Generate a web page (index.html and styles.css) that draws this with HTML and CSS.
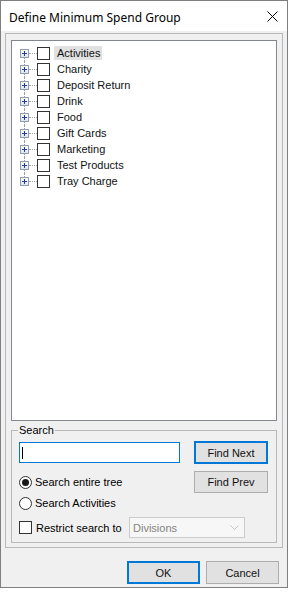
FILE: index.html
```html
<!DOCTYPE html>
<html lang="en">
<head>
  <meta charset="UTF-8">
  <meta name="viewport" content="width=device-width, initial-scale=1.0">
  <title>Define Minimum Spend Group</title>
  <link rel="stylesheet" href="styles.css">
</head>
<body>
  <div class="window">
    <div class="titlebar">
      <span class="title">Define Minimum Spend Group</span>
      <svg class="close" width="11" height="11" viewBox="0 0 11 11">
        <path d="M0.5 0.5 L10.5 10.5 M10.5 0.5 L0.5 10.5" stroke="#000" stroke-width="1" fill="none"/>
      </svg>
    </div>
    <div class="client">
      <div class="panel">
        <div class="tree">
          <ul>
            <li><span class="exp"></span><span class="twig"></span><span class="chk"></span><span class="name selected">Activities</span></li>
            <li><span class="exp"></span><span class="twig"></span><span class="chk"></span><span class="name">Charity</span></li>
            <li><span class="exp"></span><span class="twig"></span><span class="chk"></span><span class="name">Deposit Return</span></li>
            <li><span class="exp"></span><span class="twig"></span><span class="chk"></span><span class="name">Drink</span></li>
            <li><span class="exp"></span><span class="twig"></span><span class="chk"></span><span class="name">Food</span></li>
            <li><span class="exp"></span><span class="twig"></span><span class="chk"></span><span class="name">Gift Cards</span></li>
            <li><span class="exp"></span><span class="twig"></span><span class="chk"></span><span class="name">Marketing</span></li>
            <li><span class="exp"></span><span class="twig"></span><span class="chk"></span><span class="name">Test Products</span></li>
            <li><span class="exp"></span><span class="twig"></span><span class="chk"></span><span class="name">Tray Charge</span></li>
          </ul>
        </div>
        <fieldset class="search">
          <legend>Search</legend>
          <div class="srow first">
            <div class="textbox"><span class="caret"></span></div>
            <button class="btn focus">Find Next</button>
          </div>
          <div class="srow second">
            <label class="opt"><span class="radio on"></span>Search entire tree</label>
            <button class="btn prev">Find Prev</button>
          </div>
          <div class="srow third">
            <label class="opt"><span class="radio"></span>Search Activities</label>
          </div>
          <div class="srow fourth">
            <label class="opt"><span class="box"></span>Restrict search to</label>
            <div class="combo">
              <span>Divisions</span>
              <svg width="9" height="5" viewBox="0 0 9 5">
                <path d="M0.5 0.5 L4.5 4.5 L8.5 0.5" stroke="#c4c4c4" stroke-width="1" fill="none"/>
              </svg>
            </div>
          </div>
        </fieldset>
      </div>
      <div class="actions">
        <button class="btn focus wide">OK</button>
        <button class="btn wide">Cancel</button>
      </div>
    </div>
  </div>
</body>
</html>
```

FILE: styles.css
```css
body {
  margin: 0;
  background: #fff;
  font-family: "Liberation Sans", Arial, sans-serif;
  font-size: 11px;
  color: #000;
}
.window {
  width: 288px;
  height: 588px;
  box-sizing: border-box;
  border: 1px solid #7f7f7f;
  background: #f0f0f0;
  display: flex;
  flex-direction: column;
}
.titlebar {
  height: 30px;
  flex: none;
  background: #fff;
  display: flex;
  align-items: center;
  justify-content: space-between;
  padding: 3px 9px 0 8px;
  box-sizing: border-box;
}
.title {
  font-family: "Noto Sans", sans-serif;
  font-size: 12px;
  line-height: 16px;
}
.close {
  display: block;
  margin-top: -2px;
}
.client {
  flex: 1;
  display: flex;
  flex-direction: column;
}
.panel {
  flex: 1;
  margin: 2px 4px 0 4px;
  border: 1px solid #b9b9b9;
  padding: 6px 5px 4px 5px;
  display: flex;
  flex-direction: column;
}
.tree {
  flex: 1;
  background: #fff;
  border: 1px solid #828790;
}
.tree ul {
  list-style: none;
  margin: 0;
  padding: 4px 0 0 8px;
}
.tree li {
  height: 16px;
  display: flex;
  align-items: center;
  position: relative;
}
.tree li::before {
  content: "";
  position: absolute;
  left: 4px;
  top: 0;
  bottom: 0;
  border-left: 1px dotted #a0a0a0;
}
.tree li:first-child::before {
  top: 8px;
}
.tree li:last-child::before {
  bottom: 8px;
}
.exp {
  width: 9px;
  height: 9px;
  box-sizing: border-box;
  border: 1px solid #919eb0;
  background: linear-gradient(#fff, #dfe4ea);
  position: relative;
  z-index: 1;
}
.exp::before,
.exp::after {
  content: "";
  position: absolute;
  background: #1f3f8f;
}
.exp::before {
  left: 1px;
  top: 3px;
  width: 5px;
  height: 1px;
}
.exp::after {
  left: 3px;
  top: 1px;
  width: 1px;
  height: 5px;
}
.twig {
  width: 8px;
  border-top: 1px dotted #a0a0a0;
}
.chk {
  width: 13px;
  height: 13px;
  box-sizing: border-box;
  border: 1px solid #333;
  background: #fff;
  margin-right: 4px;
}
.name {
  padding: 0 2px 0 3px;
  line-height: 14px;
  color: #111;
}
.name.selected {
  background: #e1e1e1;
}
.search {
  margin: 3px 0 0 0;
  border: 1px solid #b9b9b9;
  padding: 4px 8px 4px 7px;
  min-width: 0;
}
.search legend {
  padding: 0 1px;
  margin-left: -1px;
  line-height: 13px;
}
.srow {
  display: flex;
  align-items: center;
  justify-content: space-between;
}
.first {
  height: 23px;
}
.second {
  height: 22px;
  margin-top: 7px;
}
.third {
  height: 20px;
}
.fourth {
  height: 21px;
  margin-top: 4px;
  justify-content: flex-start;
}
.textbox {
  width: 161px;
  height: 21px;
  box-sizing: border-box;
  border: 1px solid #0078d7;
  background: #fff;
  display: flex;
  align-items: center;
  padding-left: 2px;
}
.caret {
  width: 0;
  height: 12px;
  border-left: 1px solid #000;
}
.btn {
  font-family: "Liberation Sans", Arial, sans-serif;
  font-size: 11px;
  font-weight: normal;
  color: #111;
  width: 74px;
  height: 23px;
  box-sizing: border-box;
  background: #e1e1e1;
  border: 1px solid #adadad;
  border-radius: 0;
  padding: 0;
}
.btn.focus {
  border: 2px solid #0078d7;
}
.btn.prev {
  height: 22px;
}
.opt {
  display: flex;
  align-items: center;
  gap: 3px;
}
.radio {
  width: 13px;
  height: 13px;
  box-sizing: border-box;
  border: 1px solid #333;
  border-radius: 50%;
  background: #fff;
  display: flex;
  align-items: center;
  justify-content: center;
}
.radio.on::after {
  content: "";
  width: 7px;
  height: 7px;
  border-radius: 50%;
  background: #1a1a1a;
}
.box {
  width: 13px;
  height: 13px;
  box-sizing: border-box;
  border: 1px solid #333;
  background: #fff;
  margin-right: 1px;
}
.combo {
  margin-left: auto;
  margin-right: 23px;
  width: 116px;
  height: 21px;
  box-sizing: border-box;
  border: 1px solid #cccccc;
  background: #f7f7f7;
  color: #838383;
  display: flex;
  align-items: center;
  justify-content: space-between;
  padding: 0 5px 0 3px;
}
.combo svg {
  display: block;
}
.actions {
  flex: none;
  display: flex;
  justify-content: flex-end;
  gap: 6px;
  margin: 13px 8px 3px 0;
}
.btn.wide {
  width: 73px;
}
```
